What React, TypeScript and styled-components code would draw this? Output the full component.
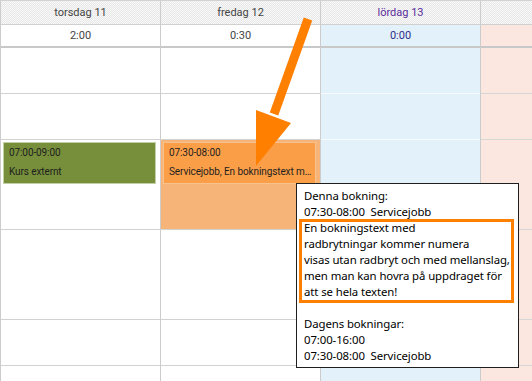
import * as React from 'react';
import styled, { createGlobalStyle } from 'styled-components';

const GlobalStyle = createGlobalStyle`
    html, body {
        margin: 0;
        padding: 0;
        background: #ffffff;
        overflow: hidden;
    }
`;

type Day = {
    name: string;
    hours: string;
    tint?: 'blue' | 'pink';
};

const days: Day[] = [
    { name: 'torsdag 11', hours: '2:00' },
    { name: 'fredag 12', hours: '0:30' },
    { name: 'lördag 13', hours: '0:00', tint: 'blue' },
    { name: '', hours: '', tint: 'pink' },
];

const slotHeights = [46, 46, 90, 90, 46, 46];

const tints = {
    blue: { bg: '#e3f1fa', line: '#f7fbfe' },
    pink: { bg: '#fce6e0', line: '#d6d6d6' },
};

const Calendar = () => {
    return (
        <StyledPage>
            <StyledGrid>
                {days.map((day, i) => (
                    <StyledColumn key={i}>
                        <StyledHeader $holiday={day.tint === 'blue'}>{day.name}</StyledHeader>
                        <StyledHours $tint={day.tint} $holiday={day.tint === 'blue'}>
                            {day.hours}
                        </StyledHours>
                        {slotHeights.map((h, j) => (
                            <StyledSlot
                                key={j}
                                $h={h}
                                $tint={day.tint}
                                $shade={i === 1 && j === 2}
                            >
                                {i === 0 && j === 2 && (
                                    <StyledEvent $kind="green">
                                        <span>07:00-09:00</span>
                                        <span>Kurs externt</span>
                                    </StyledEvent>
                                )}
                                {i === 1 && j === 2 && (
                                    <StyledEvent $kind="orange">
                                        <span>07:30-08:00</span>
                                        <span>Servicejobb, En bokningstext m…</span>
                                    </StyledEvent>
                                )}
                            </StyledSlot>
                        ))}
                    </StyledColumn>
                ))}
            </StyledGrid>

            <StyledTooltip>
                <StyledLine>Denna bokning:</StyledLine>
                <StyledLine>07:30-08:00  Servicejobb</StyledLine>
                <StyledLine>En bokningstext med</StyledLine>
                <StyledLine>radbrytningar kommer numera</StyledLine>
                <StyledLine>visas utan radbryt och med mellanslag,</StyledLine>
                <StyledLine>men man kan hovra på uppdraget för</StyledLine>
                <StyledLine>att se hela texten!</StyledLine>
                <StyledLine>&nbsp;</StyledLine>
                <StyledLine>Dagens bokningar:</StyledLine>
                <StyledLine>07:00-16:00</StyledLine>
                <StyledLine>07:30-08:00  Servicejobb</StyledLine>
                <StyledHighlight />
            </StyledTooltip>

            <StyledArrow width="532" height="381" viewBox="0 0 532 381">
                <line x1="308" y1="19" x2="274" y2="114" stroke="#ff7f00" strokeWidth="9" />
                <polygon points="256,110 291,123 256,166" fill="#ff7f00" />
            </StyledArrow>
        </StyledPage>
    );
};

export default function App() {
    return (
        <>
            <GlobalStyle />
            <Calendar />
        </>
    );
}

const StyledPage = styled.div`
    position: relative;
    width: 532px;
    height: 381px;
    overflow: hidden;
    font-family: Roboto, 'Liberation Sans', sans-serif;
`;

const StyledGrid = styled.div`
    display: grid;
    grid-template-columns: 160px 160px 160px 1fr;
    border-top: 1px solid #d2d2d2;
`;

const StyledColumn = styled.div`
    display: flex;
    flex-direction: column;
    border-left: 1px solid #cccccc;
    min-width: 0;
`;

const StyledHeader = styled.div<{ $holiday?: boolean }>`
    height: 23px;
    display: flex;
    align-items: center;
    justify-content: center;
    border-bottom: 1px solid #d0d0d0;
    background-color: #f3f3f3;
    background-image: repeating-conic-gradient(#e8e8e8 0 25%, #f8f8f8 0 50%);
    background-size: 2px 2px;
    font-size: 11px;
    color: ${(p) => (p.$holiday ? '#5a2b9c' : '#444444')};
    white-space: nowrap;
`;

const StyledHours = styled.div<{ $tint?: 'blue' | 'pink'; $holiday?: boolean }>`
    height: 21px;
    display: flex;
    align-items: center;
    justify-content: center;
    border-bottom: 2px solid #c8c8c8;
    background: ${(p) => (p.$tint ? tints[p.$tint].bg : '#ffffff')};
    font-size: 11px;
    color: ${(p) => (p.$holiday ? '#2f2f8a' : '#444444')};
`;

const StyledSlot = styled.div<{ $h: number; $tint?: 'blue' | 'pink'; $shade?: boolean }>`
    box-sizing: border-box;
    height: ${(p) => p.$h}px;
    padding: 2px 4px 0 2px;
    border-bottom: 1px solid ${(p) => (p.$tint ? tints[p.$tint].line : '#d2d2d2')};
    background: ${(p) => (p.$shade ? '#f6b479' : p.$tint ? tints[p.$tint].bg : '#ffffff')};
`;

const StyledEvent = styled.div<{ $kind: 'green' | 'orange' }>`
    box-sizing: border-box;
    height: 42px;
    display: flex;
    flex-direction: column;
    justify-content: space-between;
    padding: 4px 4px 5px 5px;
    border: 1px solid ${(p) => (p.$kind === 'green' ? '#c3cfa4' : '#f8c28f')};
    background: ${(p) => (p.$kind === 'green' ? '#778f3b' : '#fb9e48')};
    font-size: 10px;
    line-height: 12px;
    letter-spacing: -0.1px;
    color: #1e1e1e;
    white-space: nowrap;
`;

const StyledTooltip = styled.div`
    position: absolute;
    left: 296px;
    top: 183px;
    box-sizing: border-box;
    width: 223px;
    height: 185px;
    padding: 4px 7px 2px 7px;
    border: 1px solid #1f1f1f;
    background: #ffffff;
    font-family: 'Noto Sans', 'Open Sans', sans-serif;
    font-size: 11.4px;
    letter-spacing: -0.1px;
    color: #000000;
`;

const StyledLine = styled.div`
    line-height: 16px;
    height: 16px;
    white-space: pre;
`;

const StyledHighlight = styled.div`
    position: absolute;
    left: 2px;
    top: 35px;
    width: 215px;
    height: 84px;
    box-sizing: border-box;
    border: 3px solid #ff7f00;
`;

const StyledArrow = styled.svg`
    position: absolute;
    left: 0;
    top: 0;
    pointer-events: none;
`;
